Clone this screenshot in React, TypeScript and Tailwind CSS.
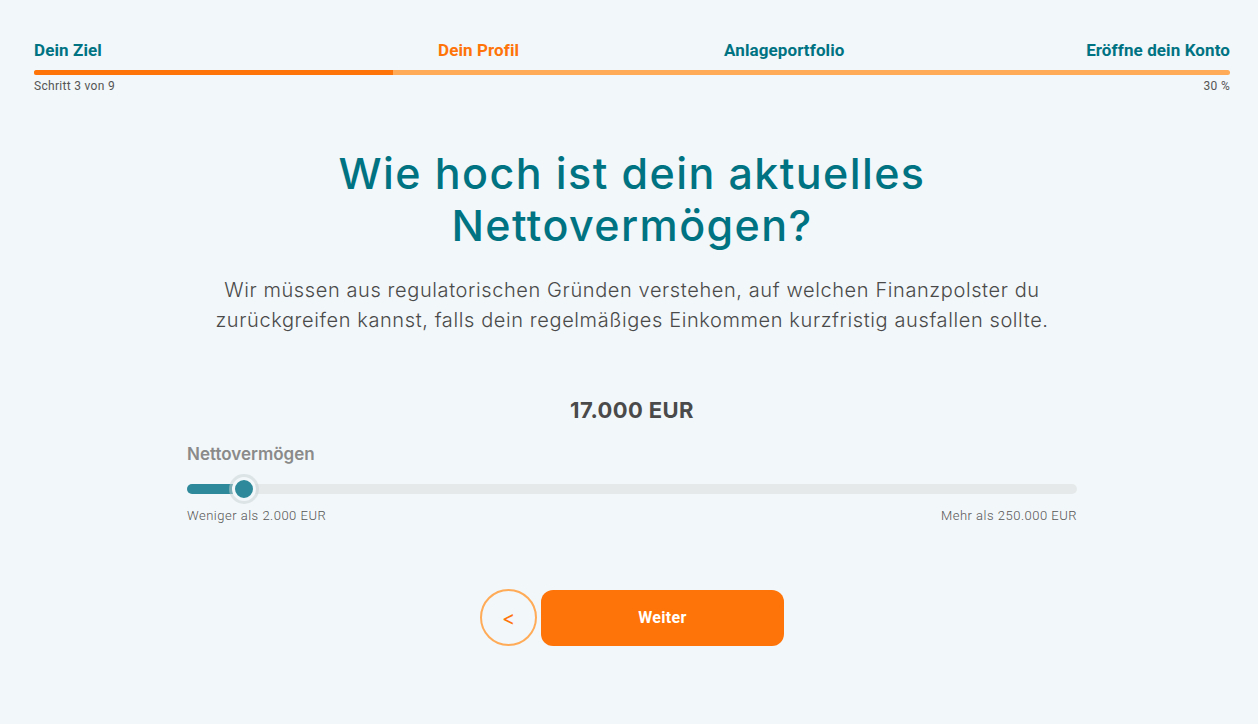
import React from "react";

export default function App() {
  return (
    <div className="min-h-[724px] w-full bg-[#f2f7f9] font-['Inter',sans-serif]">
      <div className="pl-[34px] pr-[28px] pt-[39px]">
        <div className="grid grid-cols-[404px_286px_1fr_auto] font-['Roboto',sans-serif] text-[17px] font-bold leading-[22px] tracking-[0.1px]">
          <div className="text-[#007383]">Dein Ziel</div>
          <div className="text-[#ff7409]">Dein Profil</div>
          <div className="text-[#007383]">Anlageportfolio</div>
          <div className="text-[#007383]">Eröffne dein Konto</div>
        </div>
        <div className="mt-[9px] flex h-[5px] w-full overflow-hidden rounded-full bg-[#ffab57]">
          <div className="h-full w-[30%] bg-[#ff7409]" />
        </div>
        <div className="mt-[3px] flex justify-between font-['Roboto',sans-serif] text-[12px] leading-[16px] tracking-[0.3px] text-[#555]">
          <span>Schritt 3 von 9</span>
          <span>30 %</span>
        </div>
      </div>

      <div className="mt-[53px] flex flex-col items-center pl-[6px]">
        <h1 className="text-center font-['Inter',sans-serif] text-[43px] font-medium leading-[52px] tracking-[1.4px] text-[#007383]">
          Wie hoch ist dein aktuelles
          <br />
          Nettovermögen?
        </h1>
        <p className="mt-[24px] text-center font-['Inter',sans-serif] text-[20px] font-light leading-[30px] tracking-[0.6px] text-[#4a4a4a]">
          Wir müssen aus regulatorischen Gründen verstehen, auf welchen Finanzpolster du
          <br />
          zurückgreifen kannst, falls dein regelmäßiges Einkommen kurzfristig ausfallen sollte.
        </p>

        <div className="mt-[60px] text-center font-['Inter',sans-serif] text-[22px] font-bold leading-[30px] tracking-[0.4px] text-[#4a4a4a]">
          17.000 EUR
        </div>

        <div className="mt-[18px] w-[890px]">
          <div className="font-['Inter',sans-serif] text-[17px] font-semibold leading-[22px] text-[#8a8a8a]">
            Nettovermögen
          </div>
          <div className="relative mt-[19px] h-[10px] w-full rounded-full bg-[#e5e9ea]">
            <div className="h-full w-[56px] rounded-full bg-[#2e8a9a]" />
            <div className="absolute left-[45px] top-[-7px] h-[24px] w-[24px] rounded-full border-[3px] border-[#f2f7f9] bg-[#2e8a9a] shadow-[0_0_0_3px_rgba(200,210,212,0.5)]" />
          </div>
          <div className="mt-[14px] flex justify-between font-['Roboto',sans-serif] text-[13px] font-light leading-[16px] tracking-[0.5px] text-[#555]">
            <span>Weniger als 2.000 EUR</span>
            <span>Mehr als 250.000 EUR</span>
          </div>
        </div>

        <div className="mt-[65px] flex items-center gap-[4px]">
          <button className="flex h-[57px] w-[57px] items-center justify-center rounded-full border-2 border-[#ffab57] bg-transparent font-['Inter',sans-serif] text-[20px] text-[#ff7409]">
            &lt;
          </button>
          <button className="h-[56px] w-[243px] rounded-[12px] bg-[#ff7409] font-['Roboto',sans-serif] text-[16px] font-bold tracking-[0.3px] text-white">
            Weiter
          </button>
        </div>
      </div>
    </div>
  );
}
